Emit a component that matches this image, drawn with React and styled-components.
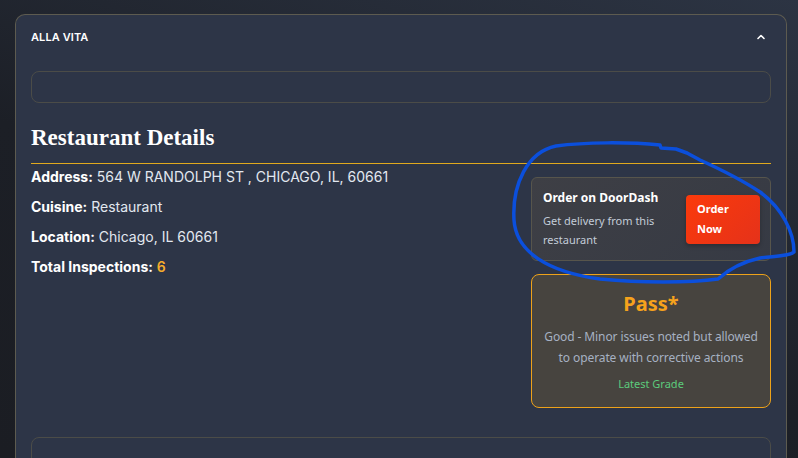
import React from 'react';
import styled, { createGlobalStyle } from 'styled-components';

const GlobalStyle = createGlobalStyle`
  html, body {
    margin: 0;
    padding: 0;
    height: 100%;
    overflow: hidden;
  }
  body {
    background: linear-gradient(200deg, #2c3443 0%, #1c1f26 55%, #1b1d23 100%);
    font-family: Inter, "Noto Sans", sans-serif;
    color: #e2e8f0;
  }
`;

const Page = styled.div`
  position: relative;
  width: 798px;
  height: 458px;
  padding: 14px 0 0 15px;
  box-sizing: border-box;
  overflow: hidden;
`;

const Card = styled.section`
  width: 772px;
  background: #2d3547;
  border: 1px solid #5d5b50;
  border-bottom: none;
  border-radius: 10px 10px 0 0;
  padding: 0 15px 0 15px;
  height: 460px;
  box-sizing: border-box;
`;

const Header = styled.div`
  height: 43px;
  display: flex;
  align-items: center;
  justify-content: space-between;
`;

const Name = styled.div`
  font-size: 11px;
  font-weight: 600;
  color: #ffffff;
  letter-spacing: 0.1px;
`;

const Toggle = styled.div`
  display: flex;
  align-items: center;
  margin-right: 4px;
`;

const EmptyBox = styled.div`
  height: ${(p) => p.$height || 30}px;
  margin-top: ${(p) => p.$top || 0}px;
  border: 1px solid #4b4c48;
  border-radius: 8px;
`;

const Title = styled.h2`
  margin: 21px 0 0;
  font-family: "Liberation Serif", serif;
  font-weight: 700;
  font-size: 23px;
  line-height: 28px;
  color: #ffffff;
`;

const Rule = styled.hr`
  margin: 11px 0 0;
  border: none;
  height: 1px;
  background: #e0a91e;
`;

const Content = styled.div`
  display: flex;
  align-items: flex-start;
  justify-content: space-between;
`;

const Details = styled.div`
  flex: 1;
  padding-top: 3px;
`;

const DetailRow = styled.p`
  margin: 0 0 10px;
  font-size: 14px;
  line-height: 20px;
  color: #e2e8f0;
`;

const Label = styled.b`
  font-weight: 700;
  color: #ffffff;
`;

const Count = styled.span`
  color: #f6ad2b;
  font-weight: 600;
`;

const Side = styled.div`
  width: 240px;
  flex-shrink: 0;
  padding-top: 13px;
  display: flex;
  flex-direction: column;
  gap: 13px;
  font-family: "Noto Sans", "Open Sans", sans-serif;
`;

const DashCard = styled.div`
  display: flex;
  align-items: center;
  gap: 12px;
  padding: 11px 10px 11px 11px;
  border: 1px solid #57554c;
  border-radius: 6px;
  background: linear-gradient(135deg, #3e3f45 0%, #363a44 100%);
`;

const DashText = styled.div`
  flex: 1;
`;

const DashTitle = styled.div`
  font-size: 12px;
  font-weight: 700;
  line-height: 18px;
  color: #ffffff;
`;

const DashSub = styled.div`
  margin-top: 4px;
  font-size: 11px;
  line-height: 19px;
  color: #c3ccd8;
`;

const OrderButton = styled.button`
  width: 74px;
  flex-shrink: 0;
  padding: 4px 11px 5px;
  border: none;
  border-radius: 4px;
  background: linear-gradient(135deg, #fb3a0b 0%, #e5321a 100%);
  box-shadow: 0 2px 4px rgba(0, 0, 0, 0.25);
  color: #ffffff;
  font-family: "Noto Sans", sans-serif;
  font-size: 11px;
  font-weight: 700;
  line-height: 20px;
  text-align: left;
`;

const GradeCard = styled.div`
  padding: 15px 9px;
  border: 1px solid #eda21a;
  border-radius: 8px;
  background: #47443f;
  text-align: center;
`;

const Grade = styled.div`
  font-size: 20px;
  font-weight: 700;
  line-height: 28px;
  color: #f6a21c;
`;

const GradeNote = styled.div`
  margin-top: 8px;
  font-size: 12px;
  line-height: 21px;
  letter-spacing: -0.1px;
  color: #a6b1c2;
`;

const GradeLabel = styled.div`
  margin-top: 8px;
  font-size: 11px;
  line-height: 16px;
  color: #5ccb7c;
`;

const Scribble = styled.svg`
  position: absolute;
  top: 0;
  left: 0;
  pointer-events: none;
`;

const App = () => {
  return (
    <>
      <GlobalStyle />
      <Page>
        <Card>
          <Header>
            <Name>ALLA VITA</Name>
            <Toggle>
              <svg width="12" height="12" viewBox="0 0 24 24" fill="none" stroke="#ffffff" strokeWidth="3.2" strokeLinecap="round" strokeLinejoin="round">
                <path d="m6 15 6-6 6 6" />
              </svg>
            </Toggle>
          </Header>
          <EmptyBox $top={13} $height={30} />
          <Title>Restaurant Details</Title>
          <Rule />
          <Content>
            <Details>
              <DetailRow><Label>Address:</Label> 564 W RANDOLPH ST , CHICAGO, IL, 60661</DetailRow>
              <DetailRow><Label>Cuisine:</Label> Restaurant</DetailRow>
              <DetailRow><Label>Location:</Label> Chicago, IL 60661</DetailRow>
              <DetailRow><Label>Total Inspections:</Label> <Count>6</Count></DetailRow>
            </Details>
            <Side>
              <DashCard>
                <DashText>
                  <DashTitle>Order on DoorDash</DashTitle>
                  <DashSub>Get delivery from this restaurant</DashSub>
                </DashText>
                <OrderButton>Order Now</OrderButton>
              </DashCard>
              <GradeCard>
                <Grade>Pass*</Grade>
                <GradeNote>Good - Minor issues noted but allowed to operate with corrective actions</GradeNote>
                <GradeLabel>Latest Grade</GradeLabel>
              </GradeCard>
            </Side>
          </Content>
          <EmptyBox $top={29} $height={60} />
        </Card>
        <Scribble width="798" height="458" viewBox="0 0 798 458">
          <path
            d="M 687 153 L 676 149 L 661 148 L 660 145 C 630 142, 585 142, 556 146 C 527 152, 512 185, 514 220 C 516 252, 548 272, 600 279 C 640 283, 690 283, 718 279 C 730 268, 742 262, 760 258 C 776 256, 790 256, 794 252 C 794 232, 782 208, 760 192 C 742 180, 722 170, 700 160 L 687 153"
            fill="none"
            stroke="#0b4fdc"
            strokeWidth="3.5"
            strokeLinecap="round"
            strokeLinejoin="round"
          />
        </Scribble>
      </Page>
    </>
  );
};

export default App;
